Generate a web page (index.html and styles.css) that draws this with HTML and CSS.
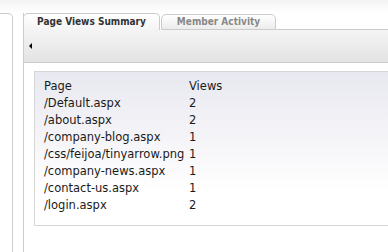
FILE: index.html
```html
<!DOCTYPE html>
<html lang="en">
<head>
    <meta charset="UTF-8">
    <title>Page Views Summary</title>
    <link rel="stylesheet" href="styles.css">
</head>
<body>
    <div class="topbar"></div>
    <div class="layout">
        <div class="side"></div>
        <div class="main">
            <div class="tabs">
                <div class="tab active">Page Views Summary</div>
                <div class="tab">Member Activity</div>
                <div class="tab-fill"></div>
            </div>
            <div class="toolbar">
                <span class="arrow"></span>
            </div>
            <div class="content">
                <div class="box">
                    <table class="stats">
                        <tr><td class="col-page">Page</td><td>Views</td></tr>
                        <tr><td>/Default.aspx</td><td>2</td></tr>
                        <tr><td>/about.aspx</td><td>2</td></tr>
                        <tr><td>/company-blog.aspx</td><td>1</td></tr>
                        <tr><td>/css/feijoa/tinyarrow.png</td><td>1</td></tr>
                        <tr><td>/company-news.aspx</td><td>1</td></tr>
                        <tr><td>/contact-us.aspx</td><td>1</td></tr>
                        <tr><td>/login.aspx</td><td>2</td></tr>
                    </table>
                </div>
            </div>
        </div>
    </div>
</body>
</html>
```

FILE: styles.css
```css
* {
    margin: 0;
    padding: 0;
    box-sizing: border-box;
}

body {
    background-color: #fff;
    color: #1a1a1a;
    font-family: "DejaVu Sans", Verdana, sans-serif;
    font-size: 11.5px;
    width: 388px;
    height: 252px;
    overflow: hidden;
}

.topbar {
    height: 13px;
    background: linear-gradient(#f3f3f3, #fff);
}

.layout {
    display: flex;
    height: 239px;
}

.side {
    width: 13px;
    border-top: 1px solid #ccc;
    border-right: 1px solid #ccc;
    border-top-right-radius: 5px;
}

.main {
    flex: 1;
    margin-left: 10px;
    display: flex;
    flex-direction: column;
    border-left: 1px solid #ccc;
}

.tabs {
    display: flex;
    align-items: flex-end;
    height: 17px;
}

.tab {
    height: 16px;
    width: 115px;
    margin-left: 1px;
    border: 1px solid #ccc;
    border-bottom: 1px solid #ccc;
    border-radius: 5px 5px 0 0;
    background: linear-gradient(#fff, #ececec);
    color: #888;
    font-family: "DejaVu Sans Condensed", "DejaVu Sans", sans-serif;
    font-size: 10px;
    font-weight: bold;
    text-align: center;
    line-height: 14px;
}

.tab.active {
    width: 137px;
    height: 17px;
    margin-left: -1px;
    border-bottom: none;
    color: #333;
    background: linear-gradient(#fff, #f4f4f4);
    line-height: 16px;
}

.tab-fill {
    flex: 1;
    border-bottom: 1px solid #ccc;
}

.toolbar {
    height: 33px;
    background: linear-gradient(#f4f4f4, #e3e3e3);
    border-bottom: 1px solid #ccc;
    display: flex;
    align-items: center;
    padding-left: 5px;
    padding-bottom: 1px;
}

.arrow {
    width: 0;
    height: 0;
    border-top: 3px solid transparent;
    border-bottom: 3px solid transparent;
    border-right: 3px solid #000;
}

.content {
    padding: 8px 0 0 10px;
}

.box {
    border: 1px solid #d6d6d6;
    border-right: none;
    background: linear-gradient(#e8e8f0, #fff 120px);
    padding: 6px 0 11px 9px;
}

.stats {
    border-collapse: collapse;
}

.stats td {
    padding: 0;
    height: 17px;
    line-height: 17px;
    white-space: nowrap;
}

.stats .col-page {
    width: 145px;
}
```
